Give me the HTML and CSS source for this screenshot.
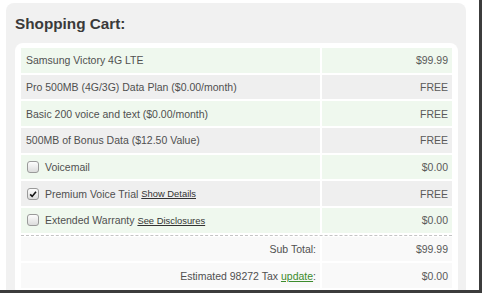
FILE: index.html
```html
<!DOCTYPE html>
<html lang="en">
  <head>
    <meta charset="UTF-8" />
    <title>Shopping Cart</title>
    <link rel="stylesheet" href="styles.css">
  </head>
  <body>
    <div class="shot">
      <div class="panel">
        <h2 class="cart-title">Shopping Cart:</h2>

        <div class="cart">
          <div class="row green">
            <div class="cell">Samsung Victory 4G LTE</div>
            <div class="cell price">$99.99</div>
          </div>
          <div class="row gray">
            <div class="cell">Pro 500MB (4G/3G) Data Plan ($0.00/month)</div>
            <div class="cell price">FREE</div>
          </div>
          <div class="row green">
            <div class="cell">Basic 200 voice and text ($0.00/month)</div>
            <div class="cell price">FREE</div>
          </div>
          <div class="row gray">
            <div class="cell">500MB of Bonus Data ($12.50 Value)</div>
            <div class="cell price">FREE</div>
          </div>

          <!-- optional items -->
          <div class="row green">
            <div class="cell"><span class="check"></span>Voicemail</div>
            <div class="cell price">$0.00</div>
          </div>
          <div class="row gray">
            <div class="cell">
              <span class="check on">
                <svg viewBox="0 0 12 12" width="12" height="12"><path d="M2.6 6.4 L5 8.9 L9.6 3.2" fill="none" stroke="#111" stroke-width="1.9"/></svg>
              </span>Premium Voice Trial&nbsp;<a href="#" class="small-link">Show Details</a>
            </div>
            <div class="cell price">FREE</div>
          </div>
          <div class="row green">
            <div class="cell"><span class="check"></span>Extended Warranty&nbsp;<a href="#" class="small-link">See Disclosures</a></div>
            <div class="cell price">$0.00</div>
          </div>

          <!-- totals -->
          <div class="totals">
            <div class="row total">
              <div class="cell label">Sub Total:</div>
              <div class="cell price">$99.99</div>
            </div>
            <div class="row total">
              <div class="cell label">Estimated 98272 Tax&nbsp;<a href="#" class="update">update</a>:</div>
              <div class="cell price">$0.00</div>
            </div>
          </div>
        </div>
      </div>
    </div>
  </body>
</html>
```

FILE: styles.css
```css
body {
  margin: 0;
  background-color: #fff;
  font-family: "Liberation Sans", Arial, sans-serif;
  color: #505050;
}
.shot {
  width: 479px;
  height: 290px;
  overflow: hidden;
  border-right: 3px solid #3c3c3c;
  border-bottom: 3px solid #3c3c3c;
  background-color: #fff;
}
.panel {
  margin: 3px 0 0 6px;
  width: 443px;
  padding: 10px 8px 20px 9px;
  background-color: #f1f1f1;
  border-radius: 8px;
}
.cart-title {
  margin: 0 0 8px 0;
  font-size: 15.3px;
  line-height: 22px;
  font-weight: bold;
  color: #3a3a3a;
}
.cart {
  background-color: #fff;
  border-radius: 8px;
  padding: 5px 6px 8px;
  display: flex;
  flex-direction: column;
  gap: 2px;
}
.row {
  display: grid;
  grid-template-columns: 299px 130px;
  column-gap: 2px;
  height: 24.67px;
}
.cell {
  display: flex;
  align-items: center;
  padding: 0 5px;
  font-size: 10.5px;
  white-space: nowrap;
}
.price {
  justify-content: flex-end;
  padding-right: 4px;
  color: #5a5a5a;
}
.green .cell {
  background-color: #eff8ee;
}
.gray .cell {
  background-color: #efefef;
}
.totals {
  border-top: 1px dashed #c4c4c4;
  display: flex;
  flex-direction: column;
  gap: 2px;
  padding-top: 1px;
}
.total .cell {
  background-color: #f9f9f9;
}
.label {
  justify-content: flex-end;
  padding-right: 4px;
}
.check {
  display: inline-flex;
  align-items: center;
  justify-content: center;
  box-sizing: border-box;
  width: 12px;
  height: 12px;
  margin: 0 6px 0 1px;
  border: 1px solid #9a9a9a;
  border-radius: 3px;
  background: linear-gradient(#fdfdfd, #dcdcdc);
}
.check svg {
  display: block;
}
.small-link {
  font-size: 9.4px;
  color: #333;
  text-decoration: underline;
}
.update {
  color: #3b8b2c;
  text-decoration: underline;
}
```
